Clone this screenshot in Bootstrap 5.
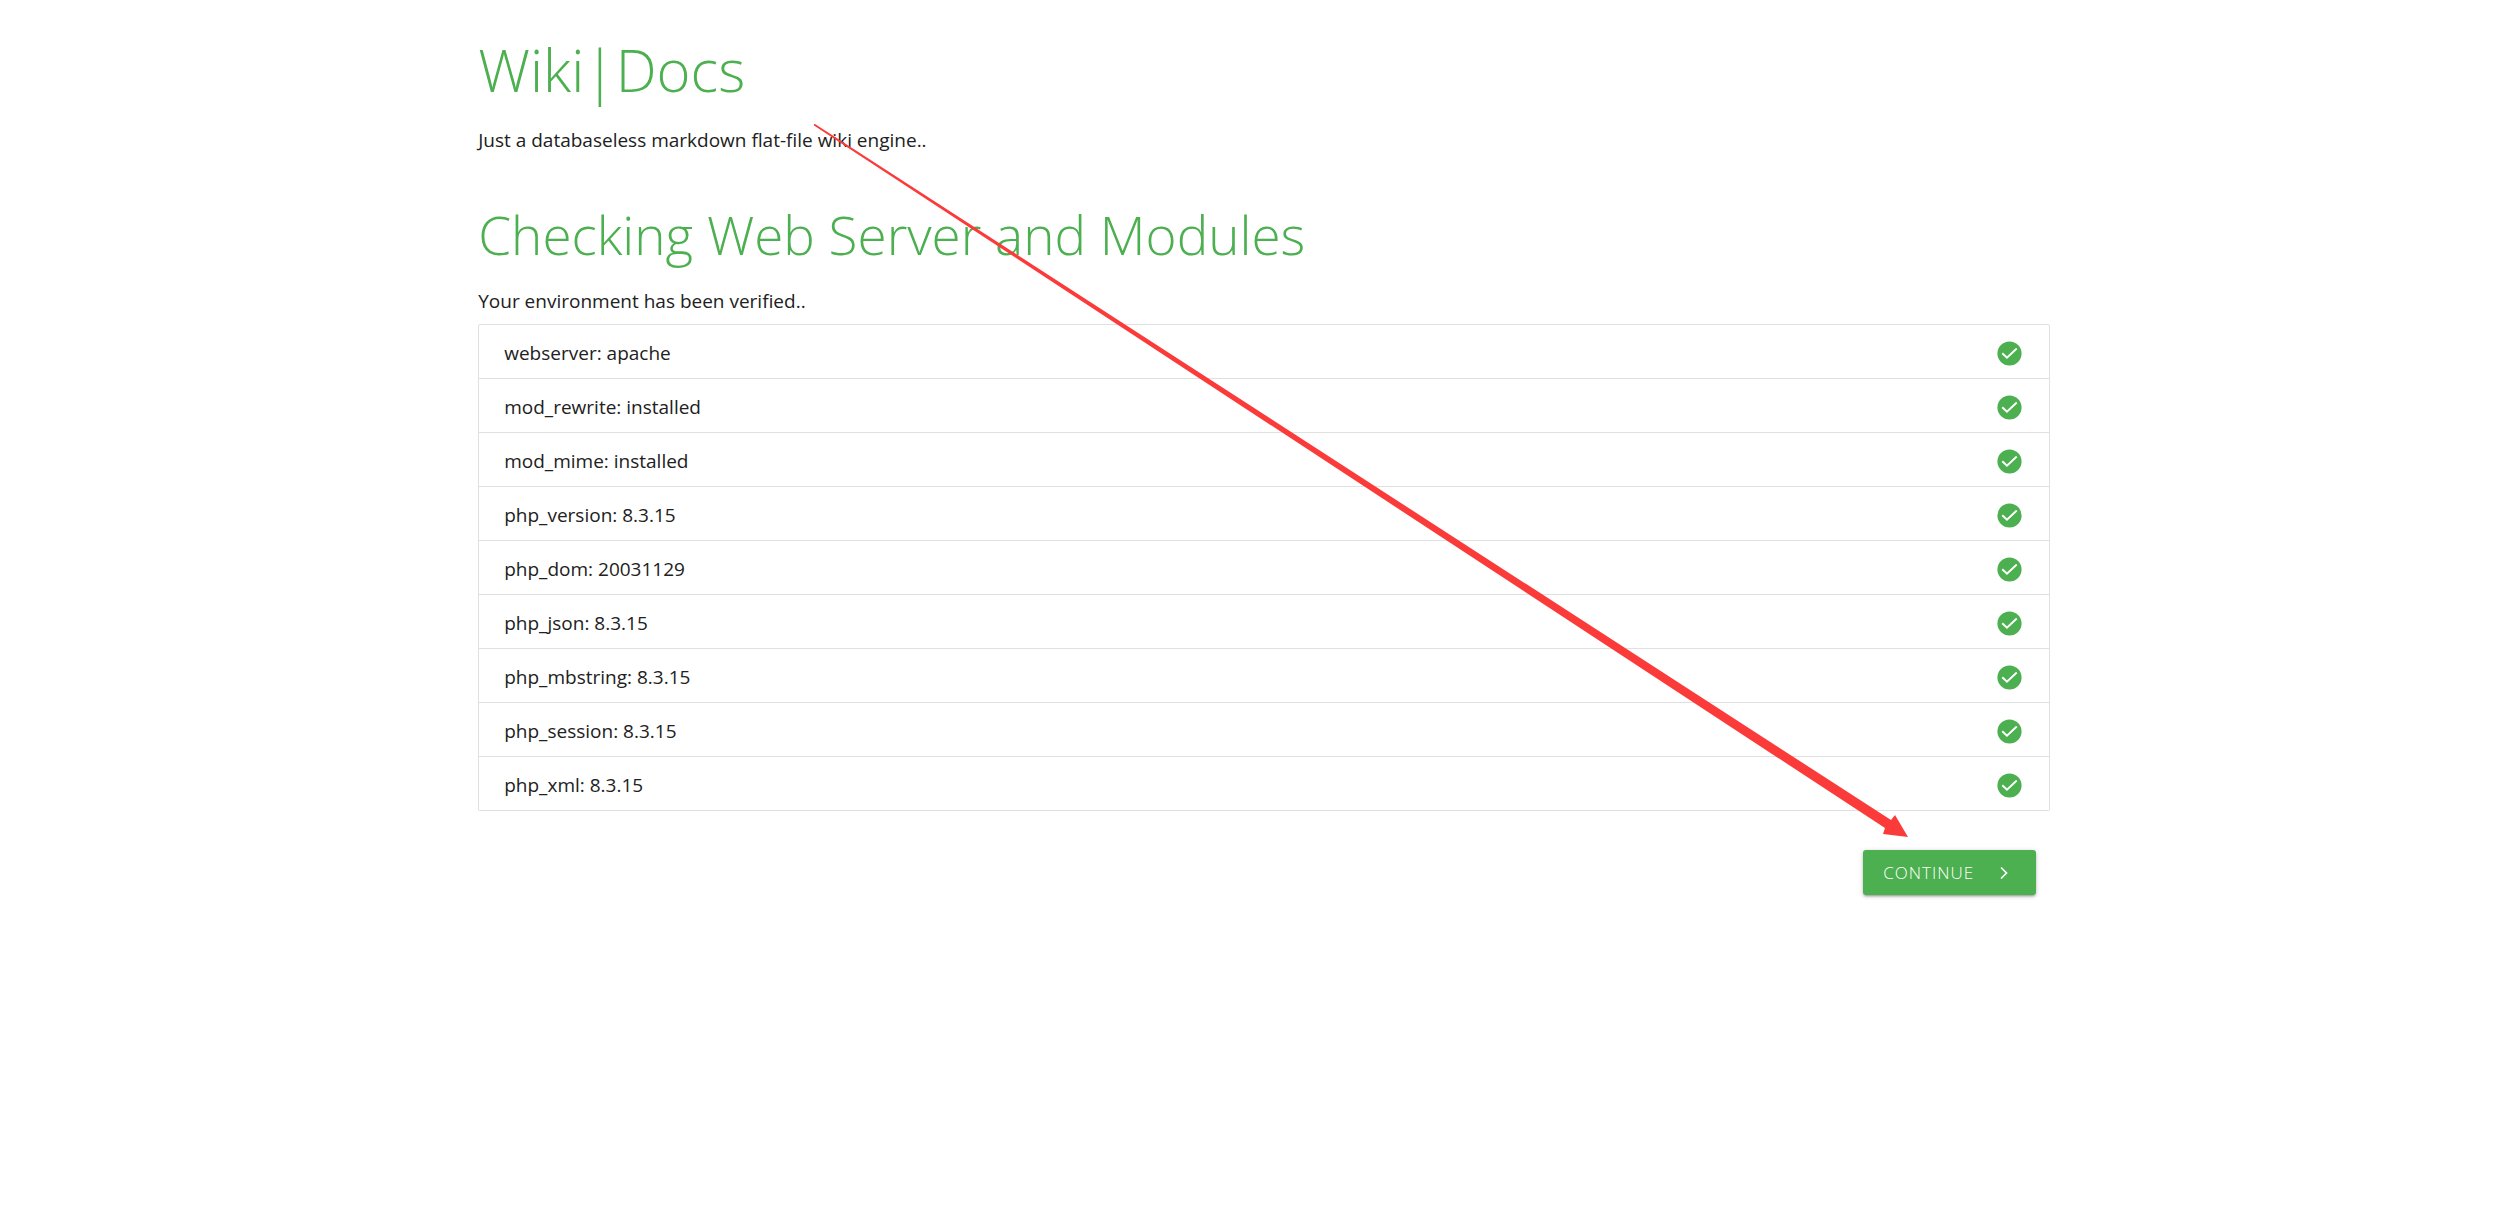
<!DOCTYPE html>
<html lang="en">
<head>
<meta charset="utf-8">
<meta name="viewport" content="width=device-width, initial-scale=1">
<title>Wiki|Docs setup</title>
<link href="https://cdn.jsdelivr.net/npm/bootstrap@5.3.0/dist/css/bootstrap.min.css" rel="stylesheet">
<style>
  :root { --wiki-green: #4caf50; --wiki-line: #e0e0e0; }
  body { font-family: "Open Sans", "Noto Sans", sans-serif; font-size: 19px; line-height: 30px; color: #212121; background: #fff; }
  .setup-page { width: 62.45%; margin-left: 19%; padding-top: 34px; }
  .setup-title, .setup-step { color: var(--wiki-green); font-weight: 300; margin-bottom: 19px; }
  .setup-title { font-size: 58px; line-height: 72px; }
  .setup-step { font-size: 53px; line-height: 64px; }
  .check-list { --bs-list-group-border-color: var(--wiki-line); --bs-list-group-border-radius: 2px; --bs-list-group-color: #212121; }
  .check-list .list-group-item { padding: 14px 25px 10px; line-height: 29px; }
  .check-list svg { width: 29px; height: 29px; }
  .setup-actions { margin-top: 39px; padding-right: 14px; }
  .btn-continue { --bs-btn-bg: var(--wiki-green); --bs-btn-hover-bg: #66bb6a; --bs-btn-active-bg: #43a047; --bs-btn-color: #fff; --bs-btn-hover-color: #fff; --bs-btn-active-color: #fff;
    height: 45px; padding: 0 20px; gap: 18px; border: 0; border-radius: 3px; font-size: 17px; font-weight: 300; letter-spacing: 1px;
    box-shadow: 0 2px 2px rgba(0,0,0,.14), 0 3px 1px -2px rgba(0,0,0,.12), 0 1px 5px rgba(0,0,0,.2); }
  .btn-continue svg { width: 24px; height: 24px; }
  .pointer-arrow { left: 0; top: 0; width: 2517px; height: 1225px; fill: #fb3b3a; }
  .pointer-clip { inset: 0; overflow: hidden; pointer-events: none; }
</style>
<script src="https://cdn.jsdelivr.net/npm/bootstrap@5.3.0/dist/js/bootstrap.bundle.min.js"></script>
</head>
<body class="position-relative min-vh-100">
<svg class="d-none" aria-hidden="true">
  <symbol id="check" viewBox="0 0 24 24"><circle cx="12" cy="12" r="10" fill="#4caf50"/><path d="M6 11.800L9.900 15.400 18 7.900" fill="none" stroke="#fff" stroke-width="1.600"/></symbol>
</svg>
<main class="setup-page pb-5">
  <header class="mb-5">
    <h1 class="setup-title">Wiki|Docs</h1>
    <p class="mb-0">Just a databaseless markdown flat-file wiki engine..</p>
  </header>
  <section>
    <h2 class="setup-step">Checking Web Server and Modules</h2>
    <p class="mb-2">Your environment has been verified..</p>
    <ul class="list-group check-list mb-0">
      <li class="list-group-item d-flex justify-content-between align-items-center">webserver: apache<svg role="img" aria-label="OK"><use href="#check"/></svg></li>
      <li class="list-group-item d-flex justify-content-between align-items-center">mod_rewrite: installed<svg role="img" aria-label="OK"><use href="#check"/></svg></li>
      <li class="list-group-item d-flex justify-content-between align-items-center">mod_mime: installed<svg role="img" aria-label="OK"><use href="#check"/></svg></li>
      <li class="list-group-item d-flex justify-content-between align-items-center">php_version: 8.3.15<svg role="img" aria-label="OK"><use href="#check"/></svg></li>
      <li class="list-group-item d-flex justify-content-between align-items-center">php_dom: 20031129<svg role="img" aria-label="OK"><use href="#check"/></svg></li>
      <li class="list-group-item d-flex justify-content-between align-items-center">php_json: 8.3.15<svg role="img" aria-label="OK"><use href="#check"/></svg></li>
      <li class="list-group-item d-flex justify-content-between align-items-center">php_mbstring: 8.3.15<svg role="img" aria-label="OK"><use href="#check"/></svg></li>
      <li class="list-group-item d-flex justify-content-between align-items-center">php_session: 8.3.15<svg role="img" aria-label="OK"><use href="#check"/></svg></li>
      <li class="list-group-item d-flex justify-content-between align-items-center">php_xml: 8.3.15<svg role="img" aria-label="OK"><use href="#check"/></svg></li>
    </ul>
  </section>
  <div class="setup-actions d-flex justify-content-end">
    <button type="button" class="btn btn-continue d-flex align-items-center">CONTINUE
      <svg viewBox="0 0 24 24" aria-hidden="true"><path d="M9 6.500l5.500 5.500L9 17.500" fill="none" stroke="currentColor" stroke-width="1.700"/></svg>
    </button>
  </div>
</main>
<div class="pointer-clip position-absolute">
  <svg class="pointer-arrow position-absolute" viewBox="0 0 2517 1225" aria-hidden="true"><path d="M814 124L815 124L1891 820L1895 815L1908 837L1883 834L1885 828L814 125.500Z"/></svg>
</div>
</body>
</html>
